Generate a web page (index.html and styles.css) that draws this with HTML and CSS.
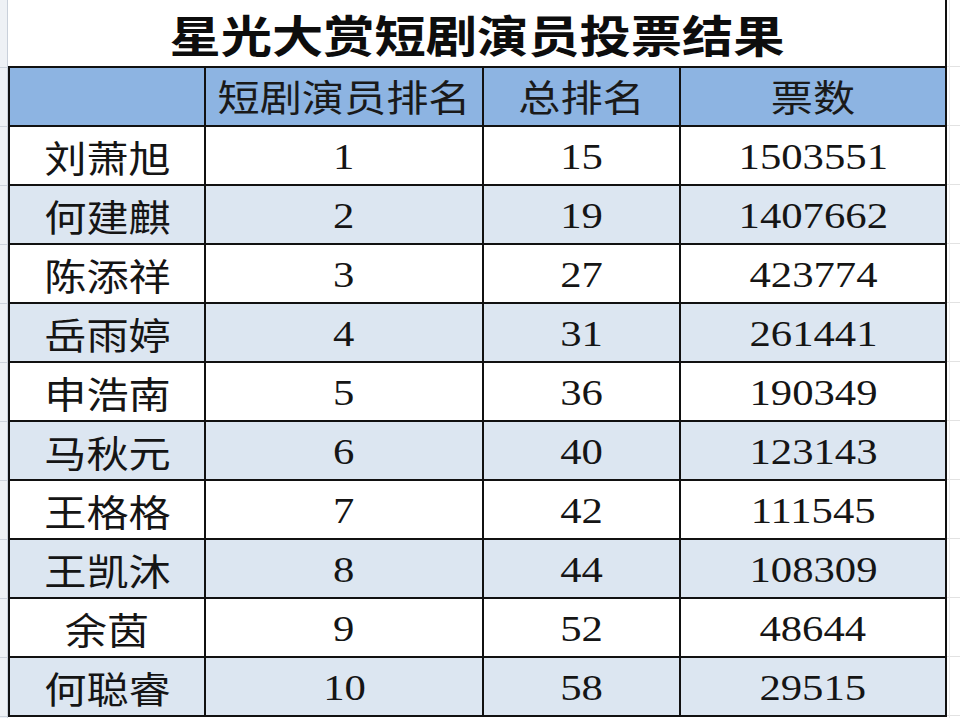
FILE: index.html
```html
<!DOCTYPE html>
<html lang="zh">
<head>
<meta charset="utf-8">
<title>星光大赏短剧演员投票结果</title>
<link rel="stylesheet" href="styles.css">
</head>
<body>
<div class="sheet">
  <div class="gutter"></div>
  <div class="main">
    <div class="title"><span class="t title-text">星光大赏短剧演员投票结果</span></div>
    <div class="grid">
      <div class="cell head"></div>
      <div class="cell head"><span class="t cjk">短剧演员排名</span></div>
      <div class="cell head"><span class="t cjk">总排名</span></div>
      <div class="cell head"><span class="t cjk">票数</span></div>

      <div class="cell"><span class="t cjk">刘萧旭</span></div>
      <div class="cell"><span class="t num">1</span></div>
      <div class="cell"><span class="t num">15</span></div>
      <div class="cell"><span class="t num">1503551</span></div>

      <div class="cell alt"><span class="t cjk">何建麒</span></div>
      <div class="cell alt"><span class="t num">2</span></div>
      <div class="cell alt"><span class="t num">19</span></div>
      <div class="cell alt"><span class="t num">1407662</span></div>

      <div class="cell"><span class="t cjk">陈添祥</span></div>
      <div class="cell"><span class="t num">3</span></div>
      <div class="cell"><span class="t num">27</span></div>
      <div class="cell"><span class="t num">423774</span></div>

      <div class="cell alt"><span class="t cjk">岳雨婷</span></div>
      <div class="cell alt"><span class="t num">4</span></div>
      <div class="cell alt"><span class="t num">31</span></div>
      <div class="cell alt"><span class="t num">261441</span></div>

      <div class="cell"><span class="t cjk">申浩南</span></div>
      <div class="cell"><span class="t num">5</span></div>
      <div class="cell"><span class="t num">36</span></div>
      <div class="cell"><span class="t num">190349</span></div>

      <div class="cell alt"><span class="t cjk">马秋元</span></div>
      <div class="cell alt"><span class="t num">6</span></div>
      <div class="cell alt"><span class="t num">40</span></div>
      <div class="cell alt"><span class="t num">123143</span></div>

      <div class="cell"><span class="t cjk">王格格</span></div>
      <div class="cell"><span class="t num">7</span></div>
      <div class="cell"><span class="t num">42</span></div>
      <div class="cell"><span class="t num">111545</span></div>

      <div class="cell alt"><span class="t cjk">王凯沐</span></div>
      <div class="cell alt"><span class="t num">8</span></div>
      <div class="cell alt"><span class="t num">44</span></div>
      <div class="cell alt"><span class="t num">108309</span></div>

      <div class="cell"><span class="t cjk">余茵</span></div>
      <div class="cell"><span class="t num">9</span></div>
      <div class="cell"><span class="t num">52</span></div>
      <div class="cell"><span class="t num">48644</span></div>

      <div class="cell alt"><span class="t cjk">何聪睿</span></div>
      <div class="cell alt"><span class="t num">10</span></div>
      <div class="cell alt"><span class="t num">58</span></div>
      <div class="cell alt"><span class="t num">29515</span></div>
    </div>
  </div>
  <div class="right"></div>
</div>
</body>
</html>
```
FILE: styles.css
```css
html, body {
  margin: 0;
  padding: 0;
  background: #ffffff;
}

body {
  width: 960px;
  height: 718px;
  overflow: hidden;
  font-family: "Noto Sans CJK SC", "Liberation Sans", sans-serif;
  color: #111111;
}

.sheet {
  display: flex;
  width: 960px;
  height: 718px;
}

.gutter {
  width: 7px;
  height: 718px;
  flex: none;
  background-color: #eef1f5;
  border-right: 1px solid #c9d0da;
  background-image: repeating-linear-gradient(to bottom, transparent 0, transparent 58px, #cdd3dc 58px, #cdd3dc 59px);
  background-position: 0 9px;
}

.main {
  width: 939px;
  flex: none;
  display: flex;
  flex-direction: column;
}

.title {
  height: 66px;
  border-bottom: 2px solid #111;
  border-right: 2px solid #111;
  background: #ffffff;
  display: flex;
  align-items: center;
  justify-content: center;
}

.grid {
  display: grid;
  grid-template-columns: 196px 278px 197px 266px;
  grid-auto-rows: 59px;
  border-left: 2px solid #111;
}

.cell {
  border-right: 2px solid #111;
  border-bottom: 2px solid #111;
  background: #ffffff;
  display: flex;
  align-items: center;
  justify-content: center;
  overflow: hidden;
}

.cell.head {
  background: #8db4e2;
}

.cell.alt {
  background: #dce6f1;
}

.t {
  display: inline-block;
  white-space: nowrap;
  line-height: 1;
}

.title-text {
  font-family: "Noto Sans CJK SC", sans-serif;
  font-weight: 700;
  font-size: 44px;
  transform: scaleX(1.165);
  color: #0d0d0d;
  margin-top: 2px;
}

.cjk {
  font-family: "Noto Sans CJK SC", sans-serif;
  font-size: 37px;
  transform: scaleX(1.14);
  color: #151515;
  margin-top: 4px;
}

.head .cjk {
  color: #1a1a1a;
  margin-top: 0;
}

.num {
  font-family: "Liberation Serif", serif;
  font-size: 35px;
  transform: scaleX(1.22);
  color: #151515;
  margin-top: 4px;
}

.right {
  flex: 1;
  height: 718px;
  background-color: #ffffff;
  background-image:
    linear-gradient(to right, transparent 0, transparent 2px, #ececec 2px, #ececec 3px, transparent 3px),
    repeating-linear-gradient(to bottom, transparent 0, transparent 58px, #e2e2e2 58px, #e2e2e2 59px);
  background-position: 0 0, 0 8px;
}
```
